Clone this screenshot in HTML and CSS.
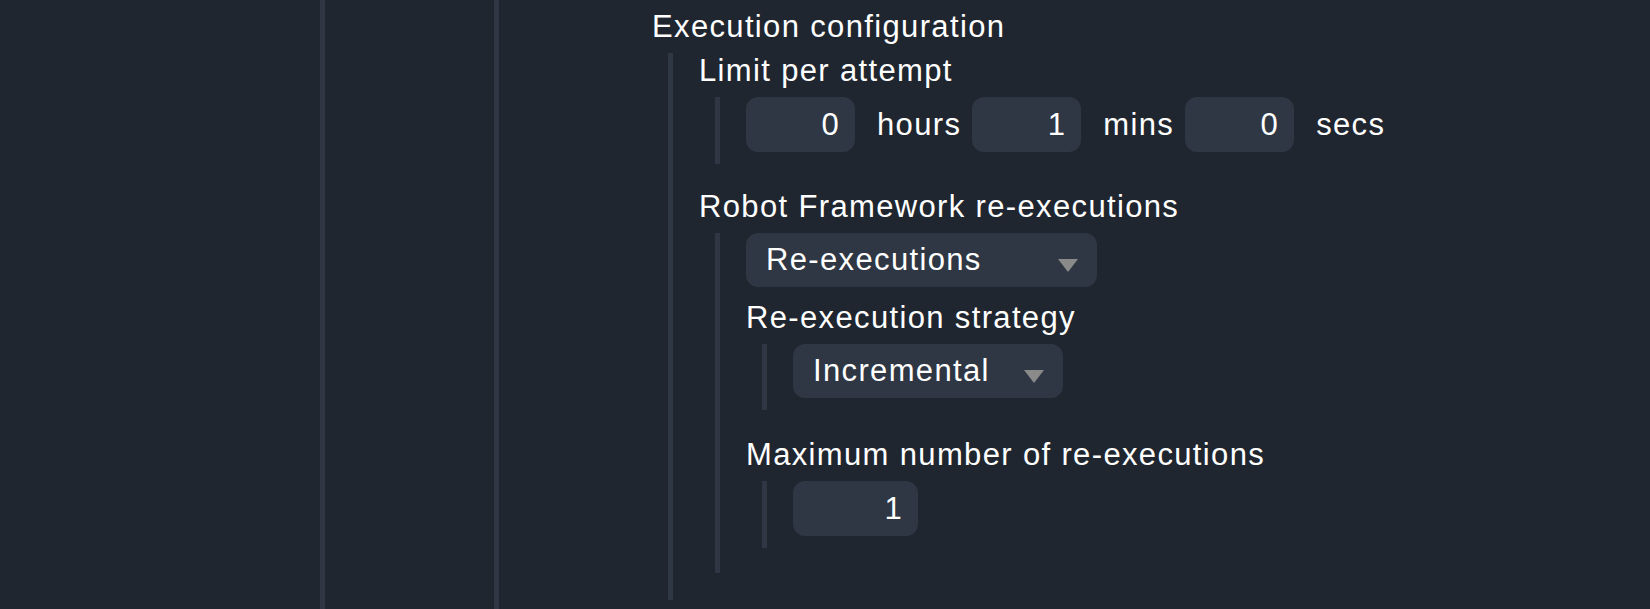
FILE: index.html
```html
<!DOCTYPE html>
<html lang="en">
<head>
    <meta charset="UTF-8">
    <meta name="viewport" content="width=device-width, initial-scale=1.0">
    <title>Execution configuration</title>
    <link rel="stylesheet" href="styles.css">
</head>
<body>
    <div class="rail rail-outer">
        <div class="rail rail-inner">

            <!-- Execution configuration -->
            <div class="label">Execution configuration</div>
            <div class="nest">

                <div class="field">
                    <div class="label">Limit per attempt</div>
                    <div class="nest">
                        <div class="duration value">
                            <input class="num" type="text" value="0">
                            <span class="unit">hours</span>
                            <input class="num" type="text" value="1">
                            <span class="unit">mins</span>
                            <input class="num" type="text" value="0">
                            <span class="unit">secs</span>
                        </div>
                    </div>
                </div>

                <div class="field field-loose">
                    <div class="label">Robot Framework re-executions</div>
                    <div class="nest">
                        <div class="select select-mode value">
                            <span>Re-executions</span>
                            <span class="caret"></span>
                        </div>

                        <div class="field field-loose">
                            <div class="label">Re-execution strategy</div>
                            <div class="nest">
                                <div class="select select-strategy value">
                                    <span>Incremental</span>
                                    <span class="caret"></span>
                                </div>
                            </div>
                        </div>

                        <div class="field">
                            <div class="label">Maximum number of re-executions</div>
                            <div class="nest">
                                <div class="value">
                                    <input class="num num-wide" type="text" value="1">
                                </div>
                            </div>
                        </div>
                    </div>
                </div>

            </div>
        </div>
    </div>
</body>
</html>
```

FILE: styles.css
```css
/* Reset some default browser styles */
* {
    box-sizing: border-box;
    margin: 0;
    padding: 0;
}

body {
    font-family: 'Liberation Sans', Arial, sans-serif;
    font-size: 31px;
    letter-spacing: 1.35px;
    background-color: #20262f;
    color: #fff;
    overflow: hidden;
}

/* page columns */
.rail {
    border-left: 5px solid #2e3743;
    min-height: 100vh;
}

.rail-outer {
    margin-left: 320px;
    padding-left: 169px;
}

.rail-inner {
    padding-left: 153px;
    padding-top: 9px;
}

.label {
    line-height: normal;
    margin-bottom: 8px;
    white-space: nowrap;
}

/* indented block with the bar on its left */
.nest {
    display: flex;
    flex-direction: column;
    margin-left: 16px;
    border-left: 5px solid #2e3743;
    padding-left: 26px;
}

.field {
    padding-bottom: 25px;
}

.field-loose {
    padding-bottom: 27px;
}

.value {
    margin-bottom: 12px;
}

.duration {
    display: flex;
    align-items: center;
}

.num {
    width: 109px;
    height: 55px;
    border: none;
    outline: none;
    border-radius: 12px;
    background-color: #2e3743;
    color: #fff;
    font: inherit;
    letter-spacing: inherit;
    text-align: right;
    padding: 0 15px 0 10px;
}

.num-wide {
    width: 125px;
}

.unit {
    margin: 0 11px 0 22px;
}

.select {
    display: flex;
    align-items: center;
    height: 54px;
    border-radius: 12px;
    background-color: #2e3743;
    padding: 0 19px 0 20px;
}

.select-mode {
    width: 351px;
    margin-bottom: 13px;
}

.select-strategy {
    width: 270px;
}

.caret {
    margin-left: auto;
    margin-top: 10px;
    width: 0;
    height: 0;
    border-left: 10px solid transparent;
    border-right: 10px solid transparent;
    border-top: 13px solid #8a8a8a;
}
```
